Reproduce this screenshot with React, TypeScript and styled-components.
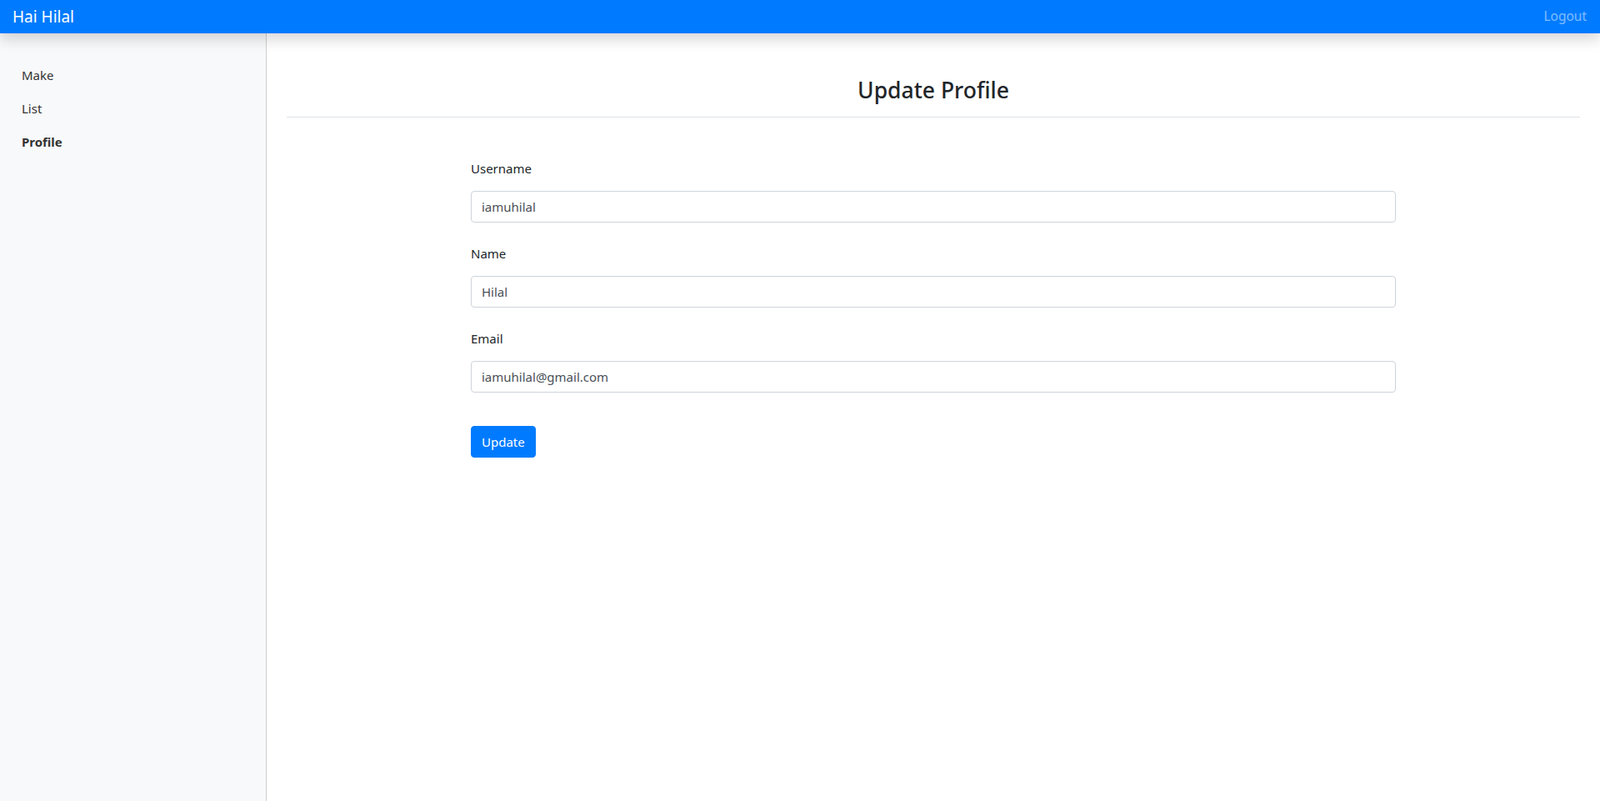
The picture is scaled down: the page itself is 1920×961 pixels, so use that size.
import React from 'react'
import styled, { createGlobalStyle } from 'styled-components'

const GlobalStyle = createGlobalStyle`
  html, body {
    margin: 0;
    padding: 0;
    background: #fff;
  }
  body {
    font-family: "Noto Sans", "Liberation Sans", sans-serif;
    font-size: 15px;
    line-height: 1.5;
    color: #212529;
  }
  * {
    box-sizing: border-box;
  }
`

const Page = styled.div`
  display: flex;
  flex-direction: column;
  min-height: 100vh;
`

const Navbar = styled.nav`
  position: relative;
  z-index: 10;
  height: 40px;
  display: flex;
  align-items: center;
  justify-content: space-between;
  padding: 0 16px 0 15px;
  background: #007bff;
  box-shadow: 0 8px 16px rgba(0, 0, 0, 0.15);
`

const Brand = styled.a`
  color: #fff;
  font-size: 19px;
  line-height: 30px;
  text-decoration: none;
`

const NavLink = styled.a`
  color: rgba(255, 255, 255, 0.5);
  font-size: 15.5px;
  text-decoration: none;
`

const Body = styled.div`
  flex: 1;
  display: flex;
`

const Sidebar = styled.aside`
  width: 320px;
  flex-shrink: 0;
  background: #f8f9fa;
  border-right: 1px solid #cfcfcf;
  padding: 30px 10px 0;
`

const SideLink = styled.a<{ $active?: boolean }>`
  display: block;
  padding: 8px 16px;
  font-size: 15px;
  line-height: 24px;
  color: #333;
  font-weight: ${(p) => (p.$active ? 700 : 400)};
  text-decoration: none;
`

const Main = styled.main`
  flex: 1;
  padding: 0 24px;
`

const Header = styled.div`
  padding: 51px 0 7px;
  border-bottom: 1px solid #dee2e6;
  text-align: center;
`

const Title = styled.h3`
  margin: 0 0 8px;
  font-size: 26.5px;
  font-weight: 500;
  line-height: 34px;
  color: #212529;
`

const Form = styled.form`
  width: 1110px;
  margin: 49px auto 0;
`

const Group = styled.div`
  margin-bottom: 25px;
`

const Label = styled.label`
  display: block;
  margin-bottom: 15px;
  line-height: 24px;
  color: #212529;
`

const Input = styled.input`
  display: block;
  width: 100%;
  height: 38px;
  padding: 6px 12px;
  font-family: inherit;
  font-size: 15px;
  line-height: 24px;
  color: #495057;
  background: #fff;
  border: 1px solid #ced4da;
  border-radius: 4px;
  outline: none;
`

const Button = styled.button`
  display: inline-block;
  vertical-align: top;
  height: 38px;
  margin-top: 15px;
  padding: 6px 12px;
  font-family: inherit;
  font-size: 15px;
  line-height: 24px;
  color: #fff;
  background: #007bff;
  border: 1px solid #007bff;
  border-radius: 4px;
  cursor: pointer;
`

const fields = [
  { label: 'Username', value: 'iamuhilal' },
  { label: 'Name', value: 'Hilal' },
  { label: 'Email', value: 'iamuhilal@gmail.com' },
]

const App = () => {
  return (
    <Page>
      <GlobalStyle />
      <Navbar>
        <Brand href="#">Hai Hilal</Brand>
        <NavLink href="#">Logout</NavLink>
      </Navbar>
      <Body>
        <Sidebar>
          <SideLink href="#">Make</SideLink>
          <SideLink href="#">List</SideLink>
          <SideLink href="#" $active>Profile</SideLink>
        </Sidebar>
        <Main>
          <Header>
            <Title>Update Profile</Title>
          </Header>
          <Form onSubmit={(e) => e.preventDefault()}>
            {fields.map((f) => (
              <Group key={f.label}>
                <Label>{f.label}</Label>
                <Input defaultValue={f.value} />
              </Group>
            ))}
            <Button type="submit">Update</Button>
          </Form>
        </Main>
      </Body>
    </Page>
  )
}

export default App
